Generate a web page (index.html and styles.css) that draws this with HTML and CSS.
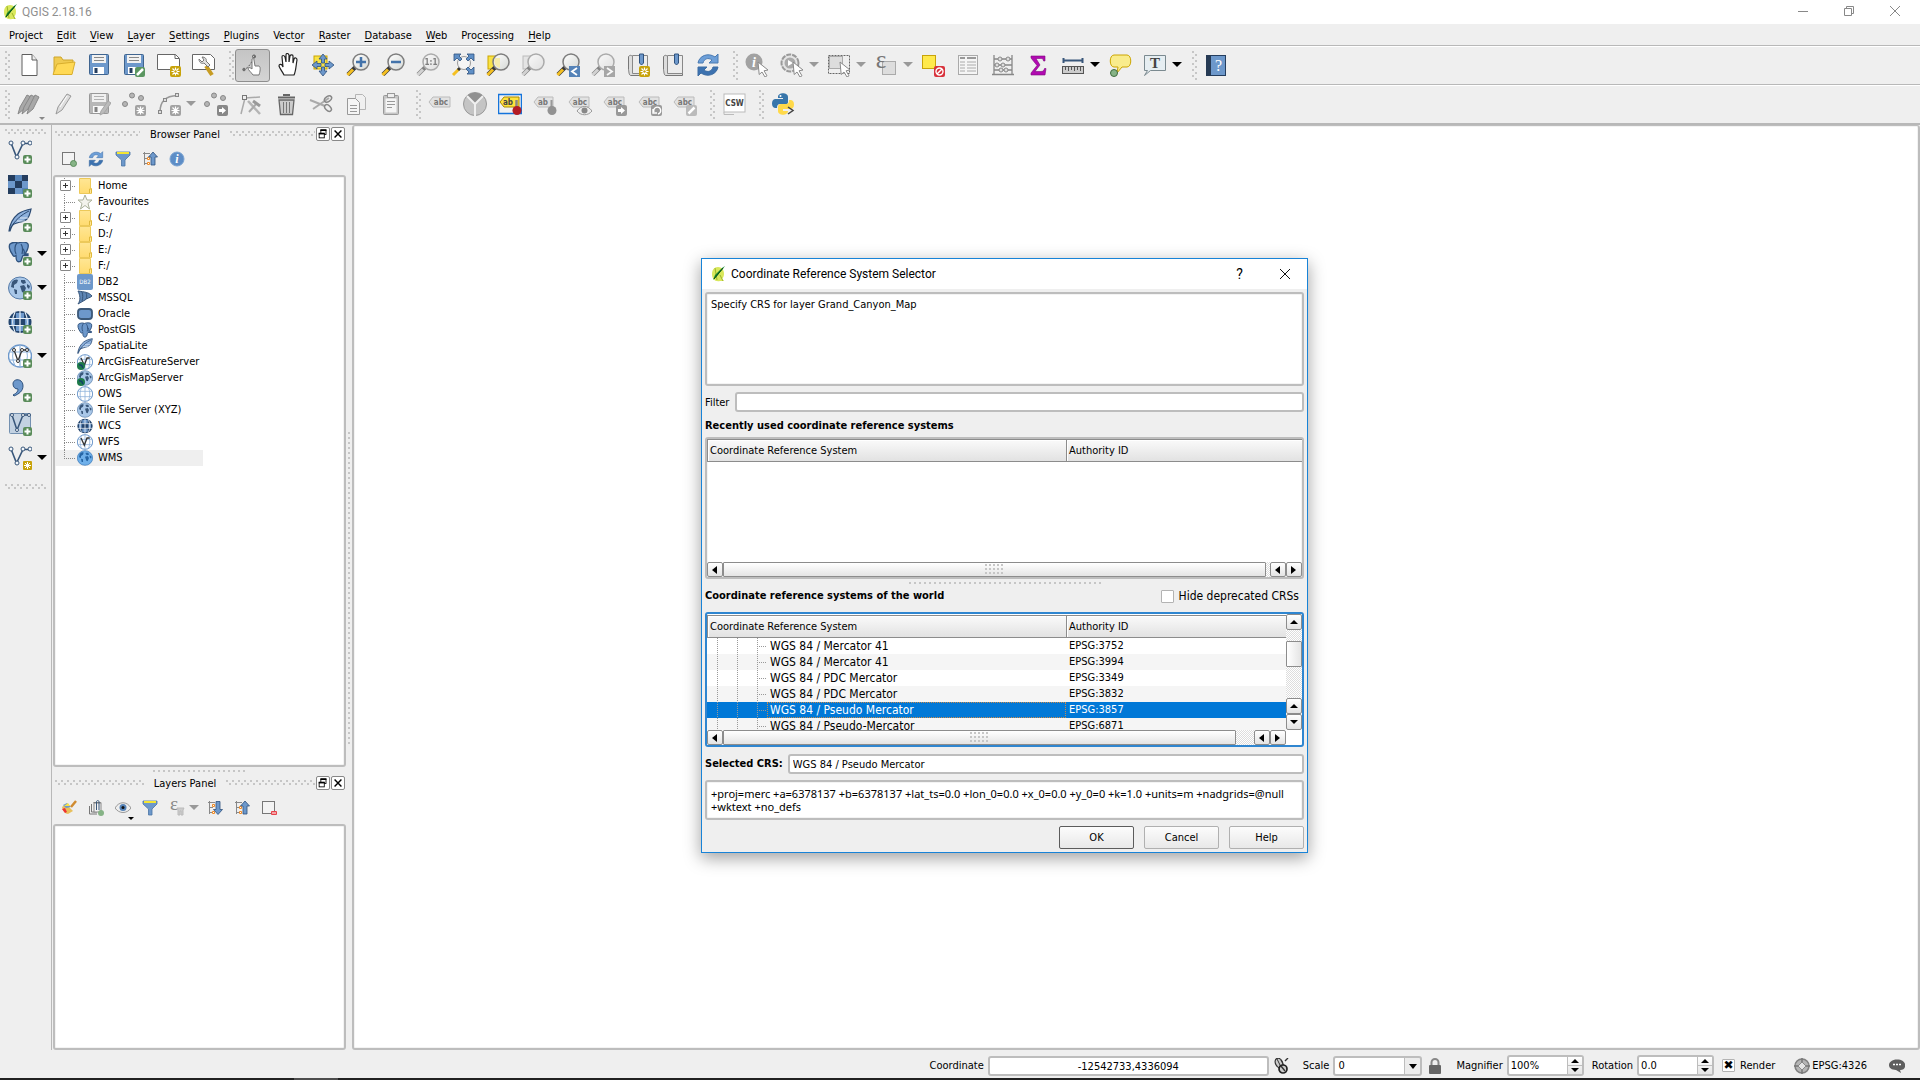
FILE: index.html
```html
<!DOCTYPE html>
<html lang="en">
<head>
<meta charset="utf-8">
<title>QGIS 2.18.16</title>
<link rel="stylesheet" href="styles.css">
</head>
<body>
<svg class="defs" aria-hidden="true">
  <defs>
    <linearGradient id="gGlass" x1="0" y1="0" x2="1" y2="1"><stop offset="0" stop-color="#fff"/><stop offset="1" stop-color="#d5d8d5"/></linearGradient>
    <linearGradient id="gFolder" x1="0" y1="0" x2="0" y2="1"><stop offset="0" stop-color="#ffe694"/><stop offset="1" stop-color="#ffdb70"/></linearGradient>
    <g id="plus"><rect x="15" y="15" width="9" height="9" rx="2" fill="#5a8c5a"/><path d="M19.500 16.500v6M16.500 19.500h6" stroke="#fff" stroke-width="2"/></g>
    <g id="spark"><rect x="13" y="13" width="11" height="11" rx="2" fill="#c8a30a"/><path d="M18.500 14.500v8M14.500 18.500h8M15.500 15.500l6 6M21.500 15.500l-6 6" stroke="#fff" stroke-width="1.200"/><circle cx="18.500" cy="18.500" r="1.200" fill="#c8a30a"/></g>
    <g id="cursor"><path d="M13 9l10 8-4 .8 3 5-2 1.200-3-5-2.800 2.500z" fill="#fff" stroke="#8a8a8a"/></g>
    <g id="lens"><path d="M9 14.500l-7 7" stroke="#3a3a3a" stroke-width="4"/><path d="M7 16.500l-5.500 5.500" stroke="#f5c022" stroke-width="3"/><circle cx="15" cy="9" r="8" fill="url(#gGlass)" stroke="#7d7d7d" stroke-width="1.500"/></g>
    <g id="vec"><path d="M3 3l5.500 14L15 3.500h6" fill="none" stroke="#38567a" stroke-width="1.600"/><g fill="#f4f8fc" stroke="#38567a"><circle cx="3" cy="3" r="2"/><circle cx="15" cy="3" r="2"/><circle cx="22" cy="3" r="2"/><circle cx="9" cy="17" r="2"/></g></g>
    <g id="elephant"><path d="M2 2c3-2 6-2 8-1 4-1.500 9-1 10 1 1 3-1 7-3 10h3v1.500h-5c-1 0-1 6-3 6-3 1-4-1-4-6-2 1.500-3 .500-3.500-1C1.500 8.500.500 4 2 2z" fill="#6d98cb" stroke="#2f527e" stroke-width="1.300"/><path d="M8 12c-2-4-1-9 1-11M13 2c2 3 2 6 1 10M16 12c1-3 0-4-2-6" fill="none" stroke="#2f527e" stroke-width="1.200"/></g>
    <g id="feather"><path d="M1 23c1-7 4-13 9-17 4-3 8-4 13-5-1 4-1 7-4 10-3 3-9 3-13 5-2 1-3 4-4 7z" fill="#8db0dc" stroke="#2b4a72" stroke-width="1.200"/><path d="M2 21C7 12 13 7 21 3" fill="none" stroke="#2b4a72"/><path d="M9 13h8M12 10h8" fill="none" stroke="#dce8f5"/></g>
    <g id="earth"><ellipse cx="12" cy="12" rx="11.500" ry="11" fill="#a9c7e8" stroke="#567ba8"/><path d="M4 6c2-3 5-3 6-2l-1 3-3 2 0 3-3-1zM13 4l4 0 1 3-3 1-2-2zM12 10l4-1 2 3-2 5-2-1zM19 8l3 2-1 3-2-2zM6 13l3 1 0 4-2 0z" fill="#38567a"/></g>
    <g id="grid"><ellipse cx="12" cy="12" rx="11.500" ry="11" fill="#fff" stroke="#6d98cb" stroke-width="1.500"/><path d="M12 1v22M1 8h22M1 16h22M7 2c-3 6-3 14 0 20M17 2c3 6 3 14 0 20" fill="none" stroke="#8fb3da" stroke-width="1.200"/></g>
    <g id="darkgrid"><ellipse cx="12" cy="12" rx="11.500" ry="11" fill="#24456e"/><path d="M8 3h8v5H8zM3 9h4v6H3zM17 9h4v6h-4zM8 16h8v5H8z" fill="#6d98cb"/><path d="M12 1v22M1 8.500h22M1 15.500h22M7 2c-3 6-3 14 0 20M17 2c3 6 3 14 0 20" fill="none" stroke="#e9f0f8" stroke-width="1.200"/></g>
    <g id="grayBadge"><rect x="13" y="13" width="11" height="11" rx="2" fill="#a2a2a2"/></g>

    <symbol id="i-logo" viewBox="0 0 16 16"><path d="M8 1c4 0 6 3 6 7 0 2-1 4-2 5l2 2h-4C5 16 2 13 2 8c0-4 2-7 6-7z" fill="#d9e85c"/><path d="M5 2l2 12M10 9l3 6" stroke="#9db52a"/><path d="M15 0l-3 4-5 6-4 4 2-5 5-5 2-2z" fill="#16852c"/><path d="M13 2L4 13" stroke="#0a4d18"/></symbol>
    <symbol id="i-new" viewBox="0 0 24 24"><path d="M5 1.500h10l5 5.500v15.500H5z" fill="#fff" stroke="#5f5f5f"/><path d="M15 1.500V7h5" fill="#eee" stroke="#5f5f5f"/></symbol>
    <symbol id="i-open" viewBox="0 0 24 24"><path d="M2 21V4h7l2 3h10v4" fill="#f0cb50" stroke="#cda52a"/><path d="M1 21.500L5 11l18-2-3 12.500z" fill="#ffd955" stroke="#d9ae2c"/></symbol>
    <symbol id="i-save" viewBox="0 0 24 24"><rect x="2.500" y="1.500" width="19" height="20" rx="1" fill="#6d98cb" stroke="#3f648f"/><rect x="5" y="2" width="14" height="8" fill="#f1f1f1"/><path d="M7 4.500h10M7 7.500h10" stroke="#888"/><rect x="6" y="14" width="11" height="7" fill="#fff"/><rect x="7.500" y="15" width="3" height="5" fill="#243d5e"/></symbol>
    <symbol id="i-saveas" viewBox="0 0 24 24"><use href="#i-save"/><rect x="13" y="14" width="10" height="10" rx="2" fill="#5a9660"/><path d="M15 22l6-6" stroke="#fff" stroke-width="2.500"/></symbol>
    <symbol id="i-composer" viewBox="0 0 24 24"><path d="M.5 1.500h18l4 4v11H.5z" fill="#fff" stroke="#666"/><path d="M18 1.500v4h4" fill="none" stroke="#666"/><use href="#spark"/></symbol>
    <symbol id="i-manager" viewBox="0 0 24 24"><path d="M.5 1.500h18l4 4v11H.5z" fill="#fff" stroke="#666"/><path d="M14 13l6 9" stroke="#c79c23" stroke-width="4"/><path d="M7 6c0 4 3 5 5 4l4 4 2-2-4-4c1-2-1-4-4-4l2 3-2 2z" fill="#e3e3e3" stroke="#777"/></symbol>
    <symbol id="i-touch" viewBox="0 0 24 24"><path d="M2 17C8 15 10 10 14 3" fill="none" stroke="#555" stroke-dasharray="2 1.500"/><circle cx="13" cy="3.500" r="1.500" fill="none" stroke="#555"/><circle cx="3" cy="16.500" r="1.300" fill="none" stroke="#666"/><path d="M11 6c1-1 2 0 2 1l1 6 4 0c2 1 1 6 0 9h-6c-2-3-5-5-5-7 1-1 3 0 4 1z" fill="#fff" stroke="#777"/></symbol>
    <symbol id="i-pan" viewBox="0 0 24 24"><path d="M7 22c-2-4-4-6-5-9 0-2 2-2 3-1l1 2L5 4c0-2 2-2 3 0l1 5V2c0-2 2-2 3 0v7l1-6c1-2 3-1 3 0v7l1-4c1-2 3-1 3 1-1 5-1 11-3 15z" fill="#fff" stroke="#222" stroke-width="1.200" transform="translate(1 0)"/></symbol>
    <symbol id="i-pansel" viewBox="0 0 24 24"><rect x="3" y="3" width="13" height="13" fill="#f9e345" stroke="#cca500"/><path d="M12 1l4 5h-2.500v4h-3V6H8zM12 23l-4-5h2.500v-4h3v4H16zM1 12l5-4v2.500h4v3H6V16zM23 12l-5 4v-2.500h-4v-3h4V8z" fill="#6d98cb" stroke="#2f527e" stroke-width=".8"/></symbol>
    <symbol id="i-zoomin" viewBox="0 0 24 24"><use href="#lens"/><path d="M15 4v10M10 9h10" stroke="#4373aa" stroke-width="2.500"/></symbol>
    <symbol id="i-zoomout" viewBox="0 0 24 24"><use href="#lens"/><path d="M10 9h10" stroke="#4373aa" stroke-width="2.500"/></symbol>
    <symbol id="i-zoom11" viewBox="0 0 24 24"><use href="#lens"/><text x="15" y="12" font-size="8" font-weight="700" text-anchor="middle" fill="#333">1:1</text></symbol>
    <symbol id="i-full" viewBox="0 0 24 24"><path d="M8 16l-6 6" stroke="#f5c022" stroke-width="3"/><path d="M10 14l-3 3" stroke="#333" stroke-width="3"/><circle cx="13" cy="10" r="6.500" fill="#f5f5f5" stroke="#999"/><path d="M3 1h7L8 3l3 3-2 2-3-3-3 3zM23 1v7l-3-3-3 3-2-2 3-3-2-2zM23 21h-7l2-2-3-3 2-2 3 3 3-3z" fill="#5f8fc6" stroke="#2f527e" stroke-width=".8"/></symbol>
    <symbol id="i-zoomsel" viewBox="0 0 24 24"><rect x="2" y="3" width="12" height="13" fill="#f9e345" stroke="#cca500"/><use href="#lens"/><path d="M9 5h5v10a7 7 0 0 1-5-10z" fill="#f6ecaa"/></symbol>
    <symbol id="i-zoomlayer" viewBox="0 0 24 24"><rect x="2" y="3" width="12" height="13" fill="#ddd" stroke="#999"/><use href="#lens"/></symbol>
    <symbol id="i-zoomlast" viewBox="0 0 24 24"><use href="#lens"/><rect x="13" y="13" width="11" height="11" fill="#5583b8"/><path d="M21 15l-5 3.500 5 3.500" fill="none" stroke="#fff" stroke-width="1.800"/></symbol>
    <symbol id="i-zoomnext" viewBox="0 0 24 24"><use href="#lens"/><rect x="13" y="13" width="11" height="11" fill="#777"/><path d="M16 15l5 3.500-5 3.500" fill="none" stroke="#fff" stroke-width="1.800"/></symbol>
    <symbol id="i-book" viewBox="0 0 24 24"><path d="M2.500 3.500c2-2 3-1 4 0v16H21.500v3H5c-2 0-2-3-2.500-6z" fill="#ddd" stroke="#777"/><path d="M6.500 2.500h15v18h-15z" fill="#ececec" stroke="#888"/><path d="M13.500 1h4v9l-2 2-2-2z" fill="#6d98cb" stroke="#2f527e"/></symbol>
    <symbol id="i-booknew" viewBox="0 0 24 24"><use href="#i-book"/><use href="#spark"/></symbol>
    <symbol id="i-refresh" viewBox="0 0 24 24"><path d="M2 10C3 3 12-1 19 4l3-3v9h-9l3-3c-4-3-8-1-9 3z" fill="#6d9fd8" stroke="#4a7ab2"/><path d="M22 14c-1 7-10 11-17 6l-3 3v-9h9l-3 3c4 3 8 1 9-3z" fill="#3c72b0" stroke="#3c6da3"/></symbol>
    <symbol id="i-identify" viewBox="0 0 24 24"><circle cx="9" cy="9" r="8.500" fill="#a2a2a2"/><text x="9" y="14" font-family="Liberation Serif,serif" font-size="14" font-style="italic" font-weight="700" text-anchor="middle" fill="#fff">i</text><use href="#cursor"/></symbol>
    <symbol id="i-action" viewBox="0 0 24 24"><circle cx="10" cy="10" r="8.500" fill="#e4e4e4" stroke="#999" stroke-width="2" stroke-dasharray="5 1"/><circle cx="10" cy="10" r="5.500" fill="#aaa"/><path d="M8 7l5 3-5 3z" fill="#fff"/><use href="#cursor"/></symbol>
    <symbol id="i-select" viewBox="0 0 24 24"><rect x="1.500" y="2.500" width="21" height="18" fill="none" stroke="#666" stroke-dasharray="2 1"/><rect x="2.500" y="3.500" width="13" height="12" fill="#ddd" stroke="#aaa"/><use href="#cursor"/></symbol>
    <symbol id="i-expr" viewBox="0 0 24 24"><rect x="8.500" y="8.500" width="13" height="13" fill="#ddd" stroke="#aaa"/><text x="7" y="15" font-family="Liberation Serif,serif" font-size="25" text-anchor="middle" fill="#777">ε</text></symbol>
    <symbol id="i-deselect" viewBox="0 0 24 24"><rect x="1.500" y="2.500" width="13" height="13" fill="#ffe94c" stroke="#c8a30a"/><rect x="13" y="13" width="11" height="11" rx="2" fill="#d8323c"/><circle cx="18.500" cy="18.500" r="3.500" fill="none" stroke="#fff" stroke-width="1.400"/><path d="M16 21l5-5" stroke="#fff" stroke-width="1.400"/></symbol>
    <symbol id="i-table" viewBox="0 0 24 24"><rect x="2.500" y="2.500" width="19" height="19" fill="#f5f5f5" stroke="#aaa"/><path d="M4 5h5M11 5h9" stroke="#999" stroke-width="2"/><path d="M4 9h5M11 9h9M4 12h5M11 12h9M4 15h5M11 15h9M4 18h5M11 18h9" stroke="#aaa"/></symbol>
    <symbol id="i-abacus" viewBox="0 0 24 24"><path d="M3 2v19M21 2v19M1 21.500h22M3 6h18M3 12h18M3 17h18" stroke="#888" stroke-width="1.300"/><g fill="#ddd" stroke="#888"><circle cx="9" cy="6" r="2"/><circle cx="17" cy="6" r="2"/><circle cx="6" cy="12" r="2"/><circle cx="12" cy="12" r="2"/><circle cx="10" cy="17" r="2"/><circle cx="15" cy="17" r="2"/></g></symbol>
    <symbol id="i-sigma" viewBox="0 0 24 24"><path d="M5 3h14v5h-1.500c0-2-1-2.500-3-2.500H10L14 12l-5 6.500h6c2 0 3-1 3.500-3H20L19 22H5v-2l6-7.500L5 5z" fill="#b10ab1" stroke="#7d077d" stroke-width=".6"/></symbol>
    <symbol id="i-ruler" viewBox="0 0 24 24"><path d="M2 7.500h20M2.500 5v5M21.500 5v5" stroke="#38567a" stroke-width="2"/><rect x="1.500" y="13.500" width="21" height="7" fill="#ccc" stroke="#555"/><path d="M4.500 14v3M7.500 14v4M10.500 14v3M13.500 14v4M16.500 14v3M19.500 14v4" stroke="#555"/></symbol>
    <symbol id="i-tip" viewBox="0 0 24 24"><path d="M6 2h13c5 0 5 12 0 12h-5l-5 6 1-6H6C1 14 1 2 6 2z" fill="#f9ec8c" stroke="#cca500"/><circle cx="6" cy="20" r="3.500" fill="#86b386" stroke="#3f6b3f"/></symbol>
    <symbol id="i-text" viewBox="0 0 24 24"><path d="M1.500 2.500h21v15h-15l-6 5 3-5h-3z" fill="#e6eef2" stroke="#7b8a90"/><text x="12" y="15" font-family="Liberation Serif,serif" font-size="15" font-weight="700" text-anchor="middle" fill="#444">T</text></symbol>
    <symbol id="i-help" viewBox="0 0 24 24"><rect x="2.500" y="2.500" width="19" height="20" fill="#6d98cb" stroke="#243d5e"/><rect x="2" y="2" width="5" height="21" fill="#263a54"/><text x="14.500" y="18" font-family="Liberation Serif,serif" font-size="16" text-anchor="middle" fill="#fff">?</text></symbol>

    <symbol id="i-pencils" viewBox="0 0 24 24"><g fill="#a8a8a8" stroke="#888"><path d="M1 22l2-7 7-12 4 2-7 12z"/><path d="M5 22l2-7 7-12 4 2-7 12z"/><path d="M10 22l2-7 6-12 4 2-6 12z"/></g></symbol>
    <symbol id="i-pencil" viewBox="0 0 24 24"><path d="M4 22l2-7 9-13 4 2-9 14z" fill="#ddd" stroke="#999"/><path d="M8 15l7-11" stroke="#fff"/></symbol>
    <symbol id="i-saveedit" viewBox="0 0 24 24"><use href="#i-save"/><path d="M13 23l1-4 7-10 3 2-7 10z" fill="#999" stroke="#777"/></symbol>
    <symbol id="i-addfeat" viewBox="0 0 24 24"><g fill="#b5b5b5" stroke="#888"><circle cx="3" cy="12" r="2.500"/><circle cx="10" cy="3.500" r="2.500"/><circle cx="19" cy="6" r="2.500"/></g><use href="#grayBadge"/><path d="M18.500 14.500v8M14.500 18.500h8M15.500 15.500l6 6M21.500 15.500l-6 6" stroke="#fff" stroke-width="1.200"/></symbol>
    <symbol id="i-curve" viewBox="0 0 24 24"><path d="M3 20C3 10 8 4 20 3.500" fill="none" stroke="#999" stroke-width="1.500"/><g fill="#ddd" stroke="#888"><rect x="1.500" y="18.500" width="3" height="3"/><rect x="6.500" y="6.500" width="3" height="3"/><rect x="18.500" y="1.500" width="3" height="3"/></g><use href="#grayBadge"/><path d="M18.500 14.500v8M14.500 18.500h8M15.500 15.500l6 6M21.500 15.500l-6 6" stroke="#fff" stroke-width="1.200"/></symbol>
    <symbol id="i-move" viewBox="0 0 24 24"><g fill="#b5b5b5" stroke="#888"><circle cx="3" cy="12" r="2.500"/><circle cx="10" cy="3.500" r="2.500"/><circle cx="19" cy="6" r="2.500"/></g><rect x="13" y="13" width="11" height="11" rx="2" fill="#888"/><path d="M15 17h3v-2l4 3.500-4 3.500v-2h-3z" fill="#fff"/></symbol>
    <symbol id="i-node" viewBox="0 0 24 24"><path d="M2 22L6 6l15-1" fill="none" stroke="#aaa" stroke-width="1.500"/><rect x="3.500" y="3.500" width="4" height="4" fill="#eee" stroke="#777"/><path d="M9 9l12 13" stroke="#b5b5b5" stroke-width="2.500"/><path d="M18 11l-8 9" stroke="#aaa" stroke-width="2"/><path d="M14 9l7 5" stroke="#999" stroke-width="3"/></symbol>
    <symbol id="i-trash" viewBox="0 0 24 24"><path d="M5 8h15l-1.500 14.500h-12z" fill="#ccc" stroke="#666" stroke-width="1.300"/><path d="M9.500 10v11M12.500 10v11M15.500 10v11" stroke="#777"/><path d="M4 5.500h17M9 3h7" stroke="#666" stroke-width="2"/></symbol>
    <symbol id="i-cut" viewBox="0 0 24 24"><path d="M1 8l15 6M4 17L20 6" stroke="#aaa" stroke-width="2"/><ellipse cx="19" cy="7" rx="4" ry="2.500" transform="rotate(-35 19 7)" fill="none" stroke="#888" stroke-width="1.500"/><ellipse cx="19" cy="16" rx="4" ry="2.500" transform="rotate(45 19 16)" fill="none" stroke="#888" stroke-width="1.500"/></symbol>
    <symbol id="i-copy" viewBox="0 0 24 24"><path d="M11.500 2.500h7l3 3v12h-10z" fill="#f0f0f0" stroke="#b5b5b5"/><path d="M3.500 6.500h8l4 4v12h-12z" fill="#f5f5f5" stroke="#999"/><path d="M6 13.500h7M6 16.500h7M6 19.500h7" stroke="#999"/></symbol>
    <symbol id="i-paste" viewBox="0 0 24 24"><rect x="4.500" y="3.500" width="15" height="19" rx="1" fill="#c5c5c5" stroke="#999"/><rect x="6.500" y="6.500" width="11" height="14" fill="#f5f5f5"/><rect x="8.500" y="1.500" width="7" height="4" fill="#eee" stroke="#999"/><path d="M8 9.500h8M8 12.500h8M8 15.500h5" stroke="#999"/></symbol>
    <symbol id="i-abc" viewBox="0 0 24 24"><path d="M1 10l4-5h17v10H5z" fill="#e2e2e2" stroke="#bbb"/><text x="13" y="13" font-size="8" font-weight="700" text-anchor="middle" fill="#777">abc</text></symbol>
    <symbol id="i-pie" viewBox="0 0 24 24"><circle cx="12" cy="12" r="11.500" fill="#c4c4c4" stroke="#999"/><path d="M12 12L4 4a11.500 11.500 0 0 1 16 0z" fill="#919191"/><path d="M12 12v12M12 12L4 4M12 12l8-8" stroke="#f0f0f0" stroke-width="2"/></symbol>
    <symbol id="i-abred" viewBox="0 0 24 24"><rect x=".5" y="2.500" width="23" height="19" fill="#f1f1f1" stroke="#1474dc" stroke-width="1.500"/><path d="M2 10l4-5h15v10H6z" fill="#ffe33d" stroke="#a88a00"/><text x="10" y="13" font-size="8" font-weight="700" text-anchor="middle" fill="#444">ab</text><path d="M18.500 8v8" stroke="#888" stroke-width="2.500"/><circle cx="19" cy="18.500" r="4.500" fill="#b31c24"/></symbol>
    <symbol id="i-abpin" viewBox="0 0 24 24"><path d="M1 10l4-5h15v10H5z" fill="#e2e2e2" stroke="#bbb"/><text x="10" y="13" font-size="8" font-weight="700" text-anchor="middle" fill="#777">ab</text><path d="M18.500 8v8" stroke="#999" stroke-width="2"/><circle cx="19" cy="18.500" r="4.500" fill="#929292"/></symbol>
    <symbol id="i-abcb" viewBox="0 0 24 24"><path d="M1 10l4-5h16v10H5z" fill="#e2e2e2" stroke="#bbb"/><text x="12" y="13" font-size="8" font-weight="700" text-anchor="middle" fill="#777">abc</text></symbol>
    <symbol id="i-abceye" viewBox="0 0 24 24"><use href="#i-abcb"/><path d="M9 19c4-6 11-6 15 0-4 5-11 5-15 0z" fill="#eee" stroke="#999"/><circle cx="16.500" cy="18.500" r="3" fill="#888"/></symbol>
    <symbol id="i-abcmove" viewBox="0 0 24 24"><use href="#i-abcb"/><rect x="13" y="13" width="11" height="11" rx="2" fill="#999"/><path d="M15 17h3v-2l4 3.500-4 3.500v-2h-3z" fill="#fff"/></symbol>
    <symbol id="i-abcrot" viewBox="0 0 24 24"><use href="#i-abcb"/><rect x="13" y="13" width="11" height="11" rx="2" fill="#999"/><path d="M16 20a3.500 3.500 0 1 1 4 2M15 17v4h4" fill="none" stroke="#fff" stroke-width="1.400"/></symbol>
    <symbol id="i-abcedit" viewBox="0 0 24 24"><use href="#i-abcb"/><rect x="13" y="13" width="11" height="11" rx="2" fill="#bbb"/><path d="M15.500 21.500l6-6" stroke="#fff" stroke-width="2.500"/></symbol>
    <symbol id="i-csw" viewBox="0 0 24 24"><path d="M2 20v2.500h10" fill="none" stroke="#bbb"/><rect x="2" y="2" width="21" height="18" fill="#fff" stroke="#bbb"/><text x="12.500" y="14" font-size="8" font-weight="700" text-anchor="middle" fill="#444">CSW</text></symbol>
    <symbol id="i-python" viewBox="0 0 24 24"><path d="M7 5c0-5 10-5 10 0v5c0 2-1 2-2 2H9c-2 0-3 1-3 4H4c-4 0-4-9 0-9h8V6H7z" fill="#3876ab"/><path d="M17 19c0 5-10 5-10 0v-4c0-2 1-3 3-3h5c2 0 3-1 3-4h2c4 0 4 9 0 9h-8v2z" fill="#ffd94a"/><circle cx="9.500" cy="4" r="1" fill="#fff"/><path d="M17 15l5 3.500-5 3.500" fill="none" stroke="#444" stroke-width="1.500"/></symbol>

    <symbol id="i-vec" viewBox="0 0 24 24"><use href="#vec"/><use href="#plus"/></symbol>
    <symbol id="i-ras" viewBox="0 0 24 24"><path d="M0 1h20v19H0z" fill="#6d98cb"/><path d="M0 1h7v6H0zM14 1h6v6h-6zM7 7h7v7H7zM0 14h7v6H0z" fill="#243d5e"/><path d="M7 1h7v6H7zM14 14h6v6h-6z" fill="#5583b8"/><use href="#plus"/></symbol>
    <symbol id="i-feather" viewBox="0 0 24 24"><use href="#feather"/></symbol>
    <symbol id="i-featherp" viewBox="0 0 24 24"><use href="#feather"/><use href="#plus"/></symbol>
    <symbol id="i-pg" viewBox="0 0 22 20"><use href="#elephant"/></symbol>
    <symbol id="i-pgp" viewBox="0 0 24 24"><use href="#elephant"/><use href="#plus"/></symbol>
    <symbol id="i-earth" viewBox="0 0 24 24"><use href="#earth"/></symbol>
    <symbol id="i-earthp" viewBox="0 0 24 24"><use href="#earth"/><use href="#plus"/></symbol>
    <symbol id="i-wms" viewBox="0 0 24 24"><ellipse cx="12" cy="12" rx="11.500" ry="11" fill="#6fb0ea" stroke="#3574b5"/><path d="M4 6c2-3 5-3 6-2l-1 3-3 2 0 3-3-1zM13 4l4 0 1 3-3 1-2-2zM12 10l4-1 2 3-2 5-2-1zM19 8l3 2-1 3-2-2zM6 13l3 1 0 4-2 0z" fill="#2565a5"/></symbol>
    <symbol id="i-wcs" viewBox="0 0 24 24"><use href="#darkgrid"/></symbol>
    <symbol id="i-wcsp" viewBox="0 0 24 24"><use href="#darkgrid"/><use href="#plus"/></symbol>
    <symbol id="i-ows" viewBox="0 0 24 24"><use href="#grid"/></symbol>
    <symbol id="i-wfs" viewBox="0 0 24 24"><use href="#grid"/><path d="M6 6l5 11 4-11h4" fill="none" stroke="#333" stroke-width="2"/></symbol>
    <symbol id="i-wfsp" viewBox="0 0 24 24"><use href="#grid"/><path d="M6 6l4 11 4-11h5" fill="none" stroke="#333" stroke-width="1.300"/><g fill="#fff" stroke="#333"><circle cx="6" cy="6" r="1.500"/><circle cx="10" cy="17" r="1.500"/><circle cx="14" cy="6" r="1.500"/><circle cx="19" cy="6" r="1.500"/></g><use href="#plus"/></symbol>
    <symbol id="i-comma" viewBox="0 0 24 24"><path d="M5 6c0-6 10-6 10 2 0 5-4 8-9 10l-1-1c4-2 5-4 5-6-3 0-5-2-5-5z" fill="#6d98cb" stroke="#2f527e"/><use href="#plus"/></symbol>
    <symbol id="i-virt" viewBox="0 0 24 24"><rect x="1.500" y="1.500" width="21" height="20" rx="1" fill="#c3d2e2" stroke="#7390b0"/><path d="M4 3l5 15 6-15h6" fill="none" stroke="#38567a" stroke-width="1.500"/><g fill="#fff" stroke="#38567a"><circle cx="4" cy="3" r="1.500"/><circle cx="9" cy="18" r="1.500"/><circle cx="15" cy="3" r="1.500"/><circle cx="21" cy="3" r="1.500"/></g><use href="#plus"/></symbol>
    <symbol id="i-vecnew" viewBox="0 0 24 24"><use href="#vec"/><rect x="15" y="15" width="9" height="9" rx="1" fill="#c8a30a"/><path d="M19.500 16v7M16 19.500h7M17 17l5 5M22 17l-5 5" stroke="#fff"/></symbol>

    <symbol id="i-addl" viewBox="0 0 16 16"><rect x="1.500" y="1.500" width="12" height="12" fill="#f3f3f3" stroke="#777"/><circle cx="12.500" cy="12.500" r="3" fill="#86b386" stroke="#5a8c5a"/></symbol>
    <symbol id="i-funnel" viewBox="0 0 16 16"><path d="M1 1h14v3L10 9v6H6.500V9L1 4z" fill="#6d98cb" stroke="#4a74a5" stroke-width=".8"/><path d="M2 2h12" stroke="#f4e532" stroke-width="2"/></symbol>
    <symbol id="i-collapse" viewBox="0 0 16 16"><path d="M2.500 1v13M1 2.500h7M3 7.500h3M3 12.500h3" fill="none" stroke="#888"/><path d="M5.500 6.500h2v2h-2zM5.500 11.500h2v2h-2z" fill="#fff" stroke="#f08a24"/><path d="M11 1l4.500 5H13v8H9V6H6.500z" fill="#6d98cb" stroke="#2f527e" stroke-width=".8"/></symbol>
    <symbol id="i-expand" viewBox="0 0 16 16"><path d="M2.500 1v13M1 2.500h7M3 7.500h3M3 12.500h3" fill="none" stroke="#888"/><path d="M5.500 4.500h2v2h-2zM5.500 11.500h2v2h-2z" fill="#fff" stroke="#f08a24"/><path d="M11 14.500L6.500 9.500H9v-8h4v8h2.500z" fill="#6d98cb" stroke="#2f527e" stroke-width=".8"/></symbol>
    <symbol id="i-info" viewBox="0 0 16 16"><circle cx="8" cy="8" r="7" fill="#5d8dc6" stroke="#7aa3d2"/><text x="8" y="12" font-family="Liberation Serif,serif" font-size="12" font-style="italic" font-weight="700" text-anchor="middle" fill="#fff">i</text></symbol>
    <symbol id="i-brush" viewBox="0 0 16 16"><path d="M1 7l4-3 7 7-5 3c-3 0-5-3-6-7z" fill="#e8c05c"/><path d="M2 5l4-2 4 4-5 1z" fill="#6d98cb"/><path d="M1 9l3 4 2-1-2-4z" fill="#e33"/><path d="M3 6l4-3 2 3z" fill="#f9e345"/><path d="M15 1l-5 6" stroke="#d08b30" stroke-width="2.500"/></symbol>
    <symbol id="i-group" viewBox="0 0 16 16"><path d="M1.500 6v8H9M3.500 4v8H9M5.500 2.500h7v8" fill="none" stroke="#777"/><rect x="6" y="3" width="7" height="9" fill="#f3f3f3" stroke="#888"/><path d="M8.500 10V2c0-2 2.500-2 2.500 0v8" fill="none" stroke="#38567a"/><circle cx="13" cy="13" r="3" fill="#86b386"/></symbol>
    <symbol id="i-eye" viewBox="0 0 16 16"><path d="M0 8c4-7 12-7 16 0-4 6-12 6-16 0z" fill="#eee" stroke="#999"/><circle cx="8" cy="7.500" r="3.500" fill="#5583b8"/><circle cx="8" cy="7.500" r="1.500" fill="#111"/></symbol>
    <symbol id="i-efilter" viewBox="0 0 16 16"><text x="5" y="10" font-family="Liberation Serif,serif" font-size="19" text-anchor="middle" fill="#888">ε</text><path d="M8 8h7l-1 2v5h-2v-4h-1v4H9v-5z" fill="#ccc" stroke="#bbb"/></symbol>
    <symbol id="i-removel" viewBox="0 0 16 16"><rect x="1.500" y="1.500" width="12" height="12" fill="#f3f3f3" stroke="#777"/><rect x="10" y="11" width="6" height="4" rx="1" fill="#e8434a"/><path d="M11 13h4" stroke="#fff"/></symbol>

    <symbol id="i-folder" viewBox="0 0 16 16"><path d="M2.500.500h11v10h1v5h-12z" fill="url(#gFolder)" stroke="#ecc95a"/><path d="M12.500 15v-4h2v4" fill="#ffe694" stroke="#e0b93c"/></symbol>
    <symbol id="i-star" viewBox="0 0 16 16"><path d="M8 1l2 5h5l-4 3.500L12.500 15 8 11.500 3.500 15 5 9.500 1 6h5z" fill="#f3f3ec" stroke="#aab09a"/></symbol>
    <symbol id="i-db2" viewBox="0 0 16 16"><rect width="16" height="16" rx="2" fill="#6d98cb"/><text x="8" y="10" font-size="6" text-anchor="middle" fill="#fff">DB2</text></symbol>
    <symbol id="i-mssql" viewBox="0 0 16 16"><path d="M1 1c6 1 11 1 14 5-2 2-5 2-7 4l-7 4c3-4 2-9 0-13z" fill="#5f86b5" stroke="#38567a"/><path d="M5 2c1 3 1 6 0 9M9 3c1 2 1 4 0 6" fill="none" stroke="#38567a"/></symbol>
    <symbol id="i-oracle" viewBox="0 0 16 16"><rect x="1" y="3" width="14" height="10" rx="3" fill="#6d98cb" stroke="#3b5878" stroke-width="1.800"/></symbol>
    <symbol id="i-agf" viewBox="0 0 24 24"><use href="#i-wfs"/><circle cx="6" cy="18" r="6" fill="#1d7a4a"/><path d="M3 16l4 1 2 4" stroke="#123c6b" stroke-width="2" fill="none"/></symbol>
    <symbol id="i-agm" viewBox="0 0 24 24"><use href="#earth"/><circle cx="6" cy="18" r="6" fill="#1d7a4a"/><path d="M3 16l4 1 2 4" stroke="#123c6b" stroke-width="2" fill="none"/></symbol>

    <symbol id="i-mouse" viewBox="0 0 16 16"><ellipse cx="6" cy="5" rx="3.500" ry="5" transform="rotate(-25 6 5)" fill="#ccc" stroke="#333" stroke-width="1.300"/><path d="M4 1l4 8M8 2l3 6" stroke="#333"/><ellipse cx="10" cy="11" rx="4" ry="4" fill="#ccc" stroke="#222" stroke-width="1.700"/><path d="M8 8l4 5M15 0l-3 3" stroke="#333" stroke-width="1.400"/></symbol>
    <symbol id="i-lock" viewBox="0 0 14 16"><path d="M3.500 8V4.500a3.500 3.500 0 0 1 7 0V8" fill="none" stroke="#888" stroke-width="2"/><rect x="1" y="7" width="12" height="9" rx="1" fill="#666"/></symbol>
    <symbol id="i-crs" viewBox="0 0 16 16"><circle cx="8" cy="8" r="7" fill="#b5b5b5" stroke="#808080" stroke-width="1.500"/><path d="M8 0v16M0 8h16" stroke="#777" stroke-width="1.500"/><path d="M8 4L12 8 8 12 4 8z" fill="#e5e5e5" stroke="#888"/></symbol>
    <symbol id="i-msg" viewBox="0 0 16 16"><path d="M8 1.500c11 0 10 11 3 10.500l1 3-5-3C-3 12-2 1.500 8 1.500z" fill="#5f5f5f"/><path d="M4 6.500h2M7 6.500h2M10 6.500h2" stroke="#fff" stroke-width="1.500"/></symbol>
    <symbol id="i-float" viewBox="0 0 14 14"><rect x="4.500" y="2.500" width="6" height="5" fill="#fff" stroke="#000"/><path d="M4 2.500h7" stroke="#000" stroke-width="2"/><rect x="2.500" y="6.500" width="6" height="5" fill="#fff" stroke="#000"/><path d="M2 6.500h7" stroke="#000" stroke-width="2"/></symbol>
    <symbol id="i-x" viewBox="0 0 14 14"><path d="M3 3l8 8M11 3l-8 8" stroke="#000" stroke-width="1.700"/></symbol>
  </defs>
</svg>

<div class="app">
  <header class="titlebar">
    <svg class="s16"><use href="#i-logo"/></svg>
    <h1>QGIS 2.18.16</h1>
    <div class="winbtns">
      <button aria-label="Minimize"><svg class="s12" viewBox="0 0 12 12"><path d="M1 6.500h10" stroke="#888"/></svg></button>
      <button aria-label="Restore"><svg class="s12" viewBox="0 0 12 12"><path d="M1.500 3.500h7v7h-7zM3.500 3V1.500h7v7H9" fill="none" stroke="#888"/></svg></button>
      <button aria-label="Close"><svg class="s12" viewBox="0 0 12 12"><path d="M1 1l10 10M11 1L1 11" stroke="#888"/></svg></button>
    </div>
  </header>

  <nav class="menubar">
    <button>Pro<u>j</u>ect</button><button><u>E</u>dit</button><button><u>V</u>iew</button><button><u>L</u>ayer</button><button><u>S</u>ettings</button><button><u>P</u>lugins</button><button>Vect<u>o</u>r</button><button><u>R</u>aster</button><button><u>D</u>atabase</button><button><u>W</u>eb</button><button>Pro<u>c</u>essing</button><button><u>H</u>elp</button>
  </nav>

  <div class="toolbar">
    <i class="grip first"></i>
    <button aria-label="New"><svg><use href="#i-new"/></svg></button>
    <button aria-label="Open"><svg><use href="#i-open"/></svg></button>
    <button aria-label="Save"><svg><use href="#i-save"/></svg></button>
    <button aria-label="Save as"><svg><use href="#i-saveas"/></svg></button>
    <button aria-label="New composer"><svg><use href="#i-composer"/></svg></button>
    <button aria-label="Composer manager"><svg><use href="#i-manager"/></svg></button>
    <i class="grip"></i>
    <button class="pressed" aria-label="Touch zoom and pan"><svg><use href="#i-touch"/></svg></button>
    <button aria-label="Pan"><svg><use href="#i-pan"/></svg></button>
    <button aria-label="Pan to selection"><svg><use href="#i-pansel"/></svg></button>
    <button aria-label="Zoom in"><svg><use href="#i-zoomin"/></svg></button>
    <button aria-label="Zoom out"><svg><use href="#i-zoomout"/></svg></button>
    <button class="dis" aria-label="Zoom to native resolution"><svg><use href="#i-zoom11"/></svg></button>
    <button aria-label="Zoom full"><svg><use href="#i-full"/></svg></button>
    <button aria-label="Zoom to selection"><svg><use href="#i-zoomsel"/></svg></button>
    <button class="dis" aria-label="Zoom to layer"><svg><use href="#i-zoomlayer"/></svg></button>
    <button aria-label="Zoom last"><svg><use href="#i-zoomlast"/></svg></button>
    <button class="dis" aria-label="Zoom next"><svg><use href="#i-zoomnext"/></svg></button>
    <button aria-label="New bookmark"><svg><use href="#i-booknew"/></svg></button>
    <button aria-label="Show bookmarks"><svg><use href="#i-book"/></svg></button>
    <button aria-label="Refresh"><svg><use href="#i-refresh"/></svg></button>
    <i class="grip"></i>
    <button aria-label="Identify"><svg><use href="#i-identify"/></svg></button>
    <button class="drop off" aria-label="Run action"><svg><use href="#i-action"/></svg></button>
    <button class="drop off" aria-label="Select features"><svg><use href="#i-select"/></svg></button>
    <button class="drop off" aria-label="Select by expression"><svg><use href="#i-expr"/></svg></button>
    <button aria-label="Deselect"><svg><use href="#i-deselect"/></svg></button>
    <button aria-label="Attribute table"><svg><use href="#i-table"/></svg></button>
    <button aria-label="Field calculator"><svg><use href="#i-abacus"/></svg></button>
    <button aria-label="Statistics"><svg><use href="#i-sigma"/></svg></button>
    <button class="drop" aria-label="Measure"><svg><use href="#i-ruler"/></svg></button>
    <button aria-label="Map tips"><svg><use href="#i-tip"/></svg></button>
    <button class="drop" aria-label="Text annotation"><svg><use href="#i-text"/></svg></button>
    <i class="grip"></i>
    <button aria-label="Help contents"><svg><use href="#i-help"/></svg></button>
  </div>

  <div class="toolbar">
    <i class="grip first"></i>
    <button class="corner" aria-label="Current edits"><svg><use href="#i-pencils"/></svg></button>
    <button aria-label="Toggle editing"><svg><use href="#i-pencil"/></svg></button>
    <button class="dis" aria-label="Save layer edits"><svg><use href="#i-saveedit"/></svg></button>
    <button aria-label="Add feature"><svg><use href="#i-addfeat"/></svg></button>
    <button class="drop off" aria-label="Add circular string"><svg><use href="#i-curve"/></svg></button>
    <button aria-label="Move feature"><svg><use href="#i-move"/></svg></button>
    <button aria-label="Node tool"><svg><use href="#i-node"/></svg></button>
    <button aria-label="Delete selected"><svg><use href="#i-trash"/></svg></button>
    <button aria-label="Cut"><svg><use href="#i-cut"/></svg></button>
    <button aria-label="Copy"><svg><use href="#i-copy"/></svg></button>
    <button aria-label="Paste"><svg><use href="#i-paste"/></svg></button>
    <i class="grip"></i>
    <button aria-label="Labeling"><svg><use href="#i-abc"/></svg></button>
    <button aria-label="Diagrams"><svg><use href="#i-pie"/></svg></button>
    <button aria-label="Highlight pinned labels"><svg><use href="#i-abred"/></svg></button>
    <button aria-label="Pin labels"><svg><use href="#i-abpin"/></svg></button>
    <button aria-label="Show or hide labels"><svg><use href="#i-abceye"/></svg></button>
    <button aria-label="Move label"><svg><use href="#i-abcmove"/></svg></button>
    <button aria-label="Rotate label"><svg><use href="#i-abcrot"/></svg></button>
    <button aria-label="Change label"><svg><use href="#i-abcedit"/></svg></button>
    <i class="grip"></i>
    <button aria-label="MetaSearch"><svg><use href="#i-csw"/></svg></button>
    <i class="grip"></i>
    <button aria-label="Python console"><svg><use href="#i-python"/></svg></button>
  </div>

  <main class="work">
    <aside class="sidebar">
      <i class="hgrip"></i>
      <button aria-label="Add vector layer"><svg><use href="#i-vec"/></svg></button>
      <button aria-label="Add raster layer"><svg><use href="#i-ras"/></svg></button>
      <button aria-label="Add SpatiaLite layer"><svg><use href="#i-featherp"/></svg></button>
      <button class="drop" aria-label="Add PostGIS layer"><svg><use href="#i-pgp"/></svg></button>
      <button class="drop" aria-label="Add WMS layer"><svg><use href="#i-earthp"/></svg></button>
      <button aria-label="Add WCS layer"><svg><use href="#i-wcsp"/></svg></button>
      <button class="drop" aria-label="Add WFS layer"><svg><use href="#i-wfsp"/></svg></button>
      <button aria-label="Add delimited text layer"><svg><use href="#i-comma"/></svg></button>
      <button aria-label="Add virtual layer"><svg><use href="#i-virt"/></svg></button>
      <button class="drop" aria-label="New layer"><svg><use href="#i-vecnew"/></svg></button>
      <i class="hgrip end"></i>
    </aside>

    <div class="docks">
      <section class="dock browser">
        <header class="dockhead"><i class="hgrip"></i><h2>Browser Panel</h2><i class="hgrip"></i><button aria-label="Float"><svg><use href="#i-float"/></svg></button><button aria-label="Close"><svg><use href="#i-x"/></svg></button></header>
        <div class="docktools">
          <button aria-label="Add selected layers"><svg><use href="#i-addl"/></svg></button>
          <button aria-label="Refresh"><svg><use href="#i-refresh"/></svg></button>
          <button aria-label="Filter browser"><svg><use href="#i-funnel"/></svg></button>
          <button aria-label="Collapse all"><svg><use href="#i-collapse"/></svg></button>
          <button aria-label="Properties"><svg><use href="#i-info"/></svg></button>
        </div>
        <ul class="tree box">
          <li class="exp"><svg><use href="#i-folder"/></svg>Home</li>
          <li><svg><use href="#i-star"/></svg>Favourites</li>
          <li class="exp"><svg><use href="#i-folder"/></svg>C:/</li>
          <li class="exp"><svg><use href="#i-folder"/></svg>D:/</li>
          <li class="exp"><svg><use href="#i-folder"/></svg>E:/</li>
          <li class="exp"><svg><use href="#i-folder"/></svg>F:/</li>
          <li><svg><use href="#i-db2"/></svg>DB2</li>
          <li><svg><use href="#i-mssql"/></svg>MSSQL</li>
          <li><svg><use href="#i-oracle"/></svg>Oracle</li>
          <li><svg><use href="#i-pg"/></svg>PostGIS</li>
          <li><svg><use href="#i-feather"/></svg>SpatiaLite</li>
          <li><svg><use href="#i-agf"/></svg>ArcGisFeatureServer</li>
          <li><svg><use href="#i-agm"/></svg>ArcGisMapServer</li>
          <li><svg><use href="#i-ows"/></svg>OWS</li>
          <li><svg><use href="#i-earth"/></svg>Tile Server (XYZ)</li>
          <li><svg><use href="#i-wcs"/></svg>WCS</li>
          <li><svg><use href="#i-wfs"/></svg>WFS</li>
          <li class="hl"><svg><use href="#i-wms"/></svg>WMS</li>
        </ul>
      </section>
      <i class="split"></i>
      <section class="dock layers">
        <header class="dockhead"><i class="hgrip"></i><h2>Layers Panel</h2><i class="hgrip"></i><button aria-label="Float"><svg><use href="#i-float"/></svg></button><button aria-label="Close"><svg><use href="#i-x"/></svg></button></header>
        <div class="docktools">
          <button aria-label="Layer styling"><svg><use href="#i-brush"/></svg></button>
          <button aria-label="Add group"><svg><use href="#i-group"/></svg></button>
          <button class="corner" aria-label="Visibility"><svg><use href="#i-eye"/></svg></button>
          <button aria-label="Filter legend"><svg><use href="#i-funnel"/></svg></button>
          <button class="drop off" aria-label="Filter by expression"><svg><use href="#i-efilter"/></svg></button>
          <button aria-label="Expand all"><svg><use href="#i-expand"/></svg></button>
          <button aria-label="Collapse all"><svg><use href="#i-collapse"/></svg></button>
          <button aria-label="Remove layer"><svg><use href="#i-removel"/></svg></button>
        </div>
        <div class="box fill"></div>
      </section>
    </div>
    <i class="vsplit"></i>
    <div class="canvas box"></div>
  </main>

  <footer class="status">
    <label for="coord">Coordinate</label><input id="coord" class="coord" value="-12542733,4336094">
    <button class="plain" aria-label="Toggle extents"><svg class="s16"><use href="#i-mouse"/></svg></button>
    <label for="scale" class="lscale">Scale</label>
    <span class="combo"><select id="scale"><option>0</option></select></span>
    <svg class="lock"><use href="#i-lock"/></svg>
    <label for="mag">Magnifier</label>
    <span class="spin"><input id="mag" value="100%"><span class="arrows"><button aria-label="Increase magnifier"></button><button class="dn" aria-label="Decrease magnifier"></button></span></span>
    <label for="rot">Rotation</label>
    <span class="spin"><input id="rot" value="0.0"><span class="arrows"><button aria-label="Increase rotation"></button><button class="dn" aria-label="Decrease rotation"></button></span></span>
    <label class="render"><input type="checkbox" checked>Render</label>
    <button class="plain epsg"><svg class="s16"><use href="#i-crs"/></svg>EPSG:4326</button>
    <button class="plain" aria-label="Messages"><svg class="s16"><use href="#i-msg"/></svg></button>
  </footer>
  <div class="taskbar"></div>
</div>

<div class="dialog" role="dialog" aria-labelledby="dlgt">
  <header class="dlghead">
    <svg class="s16"><use href="#i-logo"/></svg>
    <h2 id="dlgt">Coordinate Reference System Selector</h2>
    <button aria-label="What is this">?</button>
    <button aria-label="Close"><svg class="s12" viewBox="0 0 12 12"><path d="M1 1l10 10M11 1L1 11" stroke="#111"/></svg></button>
  </header>
  <div class="dlgbody">
    <div class="box note">Specify CRS for layer Grand_Canyon_Map</div>
    <div class="row filter"><label for="flt">Filter</label><input id="flt"></div>
    <h3>Recently used coordinate reference systems</h3>
    <div class="box list recent">
      <table><thead><tr><th class="c1">Coordinate Reference System</th><th>Authority ID</th></tr></thead></table>
      <div class="hbar"><button class="sb lt" aria-label="Scroll left"></button><span class="thumb wide"></span><span class="trough"></span><button class="sb lt" aria-label="Scroll left"></button><button class="sb rt" aria-label="Scroll right"></button></div>
    </div>
    <i class="split long"></i>
    <div class="row world"><h3>Coordinate reference systems of the world</h3><label class="hide"><input type="checkbox">Hide deprecated CRSs</label></div>
    <div class="box list focus">
      <div class="rows">
        <div class="left">
          <div class="clip">
          <table>
            <thead><tr><th class="c1">Coordinate Reference System</th><th>Authority ID</th></tr></thead>
            <tbody>
              <tr><td><span>WGS 84 / Mercator 41</span></td><td>EPSG:3752</td></tr>
              <tr><td><span>WGS 84 / Mercator 41</span></td><td>EPSG:3994</td></tr>
              <tr><td><span>WGS 84 / PDC Mercator</span></td><td>EPSG:3349</td></tr>
              <tr><td><span>WGS 84 / PDC Mercator</span></td><td>EPSG:3832</td></tr>
              <tr class="sel"><td><span>WGS 84 / Pseudo Mercator</span></td><td>EPSG:3857</td></tr>
              <tr><td><span>WGS 84 / Pseudo-Mercator</span></td><td>EPSG:6871</td></tr>
            </tbody>
          </table>
          </div>
          <div class="hbar"><button class="sb lt" aria-label="Scroll left"></button><span class="thumb"></span><span class="trough"></span><button class="sb lt" aria-label="Scroll left"></button><button class="sb rt" aria-label="Scroll right"></button></div>
        </div>
        <div class="vbar"><button class="sb up" aria-label="Scroll up"></button><span class="trough t1"></span><span class="thumb"></span><span class="trough"></span><button class="sb up" aria-label="Scroll up"></button><button class="sb dn" aria-label="Scroll down"></button></div>
      </div>
    </div>
    <div class="row selcrs"><label for="sel">Selected CRS:</label><input id="sel" value="WGS 84 / Pseudo Mercator"></div>
    <div class="box proj">+proj=merc +a=6378137 +b=6378137 +lat_ts=0.0 +lon_0=0.0 +x_0=0.0 +y_0=0 +k=1.0 +units=m +nadgrids=@null +wktext +no_defs</div>
    <div class="row actions"><button class="ok">OK</button><button>Cancel</button><button>Help</button></div>
  </div>
</div>
</body>
</html>
```
FILE: styles.css
```css
* { box-sizing: border-box; }
:root {
  --bg: #efefef;
  --line: #b8b8b8;
  --edge: #8c8c8c;
  --face: linear-gradient(#fff, #e4e4e4);
  --dot: conic-gradient(from 0deg at 2px 2px, transparent 75%, #c6c6c6 0);
  --ui: "DejaVu Sans Condensed", "DejaVu Sans", sans-serif;
  --title: Roboto, "Open Sans", sans-serif;
}
html, body { height: 100%; }
body { margin: 0; overflow: hidden; background: var(--bg); color: #000; font: 11px/16px var(--ui); }
button, input, select { font: inherit; color: inherit; margin: 0; padding: 0; border: 0; background: none; }
h1, h2, h3, ul { margin: 0; padding: 0; font-size: inherit; font-weight: 400; }
svg { display: block; flex: none; }
.defs { position: absolute; width: 0; height: 0; }
.s16 { width: 16px; height: 16px; }
.s12 { width: 12px; height: 12px; }

.app { height: 100vh; display: flex; flex-direction: column; }
.titlebar { height: 24px; flex: none; display: flex; align-items: center; gap: 4px; padding: 0 2px; background: #fff; color: #8f8f8f; font: 12px/16px var(--title); }
.winbtns { margin-left: auto; display: flex; height: 24px; padding-bottom: 3px; }
.winbtns button { width: 46px; display: grid; place-items: center; }

.menubar { height: 21px; flex: none; display: flex; padding: 1px 0 0 2px; }
.menubar button { padding: 0 7px; height: 22px; white-space: nowrap; }
.menubar u { text-underline-offset: 2px; }

.toolbar { height: 39px; flex: none; display: flex; align-items: center; border-top: 1px solid var(--line); box-shadow: inset 0 1px #fff; }
.toolbar button, .sidebar button, .docktools button { position: relative; flex: none; display: flex; align-items: center; justify-content: center; }
.toolbar button { width: 35px; height: 33px; }
.toolbar svg, .sidebar svg { width: 24px; height: 24px; }
.toolbar button.drop { width: 47px; padding-right: 12px; }
.drop::after, .corner::after { content: ""; position: absolute; right: 2px; top: 50%; margin-top: -3px; border: 5px solid transparent; border-bottom: 0; border-top-color: #000; }
.drop.off::after { border-top-color: #999; }
.corner::after { border-width: 3px; border-bottom: 0; right: 1px; top: auto; bottom: 1px; border-top-color: #888; }
.dis svg { filter: grayscale(1); opacity: .6; }
.toolbar .pressed { background: linear-gradient(#c4c4c4, #d4d4d4); border: 1px solid #8e8e8e; border-radius: 3px; }
.grip { flex: none; width: 6px; height: 29px; margin-left: 8px; background: var(--dot) 0 0 / 6px 6px, var(--dot) 3px 3px / 6px 6px; }
.grip.first { margin-left: 5px; }
.hgrip { display: block; height: 6px; background: var(--dot) 0 0 / 6px 6px, var(--dot) 3px 3px / 6px 6px; }

.work { flex: 1; min-height: 0; display: flex; border-top: 2px solid var(--line); }
.sidebar { width: 51px; flex: none; padding: 4px 5px 0; }
.sidebar button { width: 41px; height: 34px; padding: 0 12px 0 0; }
.sidebar .drop::after { right: -1px; }
.sidebar .hgrip.end { margin-top: 9px; }
.docks { width: 295px; flex: none; display: flex; flex-direction: column; padding-left: 1px; border-left: 1px solid var(--line); }
.dock { display: flex; flex-direction: column; min-height: 0; }
.browser { flex: 643; }
.layers { flex: 276; }
.dockhead { flex: none; height: 17px; display: flex; align-items: center; gap: 1px; padding: 1px 1px 0 2px; }
.dockhead .hgrip { flex: 1; }
.dockhead h2 { padding: 1px 9px 0; }
.dockhead button { width: 14px; height: 14px; display: grid; place-items: center; border: 1px solid #888; border-radius: 2px; background: #fff; }
.dockhead svg { width: 12px; height: 12px; }
.docktools { flex: none; height: 33px; display: flex; align-items: center; padding: 0 0 0 2px; }
.docktools button { width: 27px; height: 24px; }
.docktools svg { width: 16px; height: 16px; }
.docktools .drop { width: 38px; padding-right: 11px; }
.docktools .corner::after { bottom: 0; right: 2px; border-top-color: #000; }
.box { background: #fff; border: 2px solid #bdbdbd; border-radius: 3px; box-shadow: inset 0 0 0 1px #f3f3f3; }
.tree { flex: 1; list-style: none; overflow: hidden; padding-top: 1px; }
.fill { flex: 1; }
.tree li { position: relative; height: 16px; width: 148px; display: flex; align-items: center; gap: 5px; padding-left: 22px; white-space: nowrap; line-height: 18px; }
.tree li::before { content: ""; position: absolute; left: 9px; top: 0; width: 10px; height: 8px; border-left: 1px dotted #888; border-bottom: 1px dotted #888; }
.tree li::after { content: ""; position: absolute; left: 9px; top: 8px; height: 8px; border-left: 1px dotted #888; }
.tree li:last-child::after { display: none; }
.tree .exp::after { left: 5px; top: 2px; width: 9px; height: 9px; border: 1px solid #888; border-radius: 1px; background: linear-gradient(#333, #333) 50% 50% / 5px 1px no-repeat, linear-gradient(#333, #333) 50% 50% / 1px 5px no-repeat, #fff; }
.tree svg { width: 16px; height: 16px; }
.tree .hl { background: #efefef; }
.split { flex: none; display: block; width: 93px; height: 7px; margin: 0 auto; background: var(--dot) 0 3px / 5px 7px repeat-x; }
.split.long { width: 192px; }
.vsplit { flex: none; align-self: center; width: 2px; height: 312px; margin: 0 2px; background: var(--dot) 0 0 / 5px 5px; }
.canvas { flex: 1; border-top-width: 1px; }

.status { height: 28px; flex: none; display: flex; align-items: center; justify-content: flex-end; gap: 4px; padding: 3px 15px 0 0; white-space: nowrap; }
.status input, .row input { background: #fff; border: 2px solid #bdbdbd; border-radius: 3px; height: 20px; padding: 1px 3px 0; }
.status .coord { width: 281px; text-align: center; }
.plain { display: flex; align-items: center; gap: 2px; }
.lscale { margin-left: 10px; }
.combo { position: relative; }
.combo select { appearance: none; display: block; width: 89px; height: 20px; padding: 0 3px; border: 2px solid #bdbdbd; border-radius: 3px; background: linear-gradient(90deg, #bdbdbd 1px, #ececec 1px) right / 16px 100% no-repeat, #fff; }
.combo::after { content: ""; position: absolute; right: 5px; top: 8px; border: 4px solid transparent; border-top: 5px solid #000; border-bottom: 0; pointer-events: none; }
.lock { width: 14px; height: 16px; margin: 0 10px 0 2px; }
.spin { display: flex; width: 77px; height: 21px; border: 2px solid #bdbdbd; border-radius: 3px; background: #fff; margin-right: 4px; }
.status .spin input { flex: 1; width: 0; height: auto; border: 0; background: none; padding: 0 2px; }
.arrows { width: 15px; border-left: 1px solid #bdbdbd; display: flex; flex-direction: column; background: var(--face); }
.arrows button { flex: 1; position: relative; }
.arrows .dn { border-top: 1px solid #bdbdbd; }
.arrows button::after { content: ""; position: absolute; left: 3px; top: 2px; border: 4px solid transparent; border-bottom-color: #000; border-top: 0; }
.arrows .dn::after { border-top: 4px solid #000; border-bottom: 0; }
.render, .hide { display: flex; align-items: center; gap: 5px; }
.status .render input, .row .hide input { appearance: none; width: 13px; height: 13px; padding: 0; border: 1px solid #b3b3b3; border-radius: 1px; background: #fff; }
.status .render input { display: grid; place-items: center; }
.status .render input::before { content: "✖"; font: 12px/11px "DejaVu Sans", sans-serif; }
.epsg { margin: 0 18px 0 15px; }
.taskbar { height: 2px; flex: none; background: linear-gradient(90deg, #212121 294px, #4d4d4d 294px, #4d4d4d 338px, #212121 338px); }

.dialog { position: absolute; left: 701px; top: 258px; width: 607px; background: var(--bg); border: 1px solid #1883d7; box-shadow: 0 5px 16px rgba(0, 0, 0, .38); }
.dlghead { height: 30px; display: flex; align-items: center; padding-left: 8px; background: #fff; font: 12px/16px var(--title); }
.dlghead h2 { flex: 1; margin-left: 5px; }
.dlghead button { width: 45px; display: grid; place-items: center; font-size: 14px; }
.dlgbody { padding: 3px 3px 3px; display: flex; flex-direction: column; }
.note { height: 94px; padding: 3px 4px; }
.row { display: flex; align-items: center; }
.row input { flex: 1; min-width: 0; }
.filter { height: 20px; margin-top: 6px; gap: 6px; }
.filter label { padding-top: 1px; }
.dlgbody h3, .selcrs label { font-weight: 700; font-size: 11px; line-height: 16px; }
.dlgbody > h3 { margin: 6px 0 3px; }
.list { display: flex; flex-direction: column; }
.recent { height: 142px; justify-content: space-between; }
table { width: 100%; border-collapse: separate; border-spacing: 0; table-layout: fixed; }
th { height: 23px; padding: 1px 2px 0; text-align: left; font-weight: 400; background: linear-gradient(#fafafa, #e2e2e2); border: 1px solid var(--edge); border-width: 1px 0 1px 1px; box-shadow: inset 1px 1px #fff; }
.c1 { width: 359px; }
.clip table { margin-top: 1px; }
td { height: 16px; padding: 0 3px; white-space: nowrap; line-height: 16px; }
tbody tr:nth-child(even) { background: #f5f5f5; }
tbody tr.sel { background: #0078d7; color: #fff; }
td:first-child { padding: 0 0 0 51px; background: repeating-linear-gradient(#999 0 1px, transparent 1px 2px) 10px 0 / 1px 16px no-repeat, repeating-linear-gradient(#999 0 1px, transparent 1px 2px) 30px 0 / 1px 16px no-repeat, repeating-linear-gradient(#999 0 1px, transparent 1px 2px) 50px 0 / 1px 16px no-repeat, repeating-linear-gradient(90deg, #999 0 1px, transparent 1px 2px) 50px 8px / 10px 1px no-repeat; }
td span { display: block; margin-left: 9px; padding: 0 3px; font-size: 12px; }
.sel td span { outline: 1px dotted #c98a4a; outline-offset: -1px; }
.focus { height: 135px; border-color: #2f86d0; box-shadow: none; }
.rows { display: flex; height: 131px; }
.left { flex: 1; min-width: 0; display: flex; flex-direction: column; }
.clip { flex: 1; min-height: 0; overflow: hidden; }
.hbar, .vbar { display: flex; flex: none; }
.hbar { height: 15px; }
.vbar { width: 16px; flex-direction: column; height: 116px; }
.sb { position: relative; width: 16px; height: 16px; border: 1px solid var(--edge); border-radius: 2px; background: var(--face); }
.hbar .sb { height: 15px; }
.sb::after { content: ""; position: absolute; left: 4px; top: 3px; border: 4px solid transparent; }
.lt::after { border-right: 5px solid #000; border-left: 0; }
.rt::after { border-left: 5px solid #000; border-right: 0; }
.up::after, .dn::after { left: 3px; top: 5px; }
.up::after { border-bottom-color: #000; border-top: 0; }
.sb.dn::after { border-top-color: #000; border-bottom: 0; }
.thumb { border: 1px solid var(--edge); border-radius: 1px; }
.hbar .thumb { width: 513px; background: var(--face); display: grid; place-items: center; }
.hbar .thumb.wide { width: 543px; }
.hbar .thumb::after { content: ""; width: 20px; height: 11px; background: var(--dot) 0 0 / 4px 4px; }
.vbar .thumb { height: 26px; background: linear-gradient(90deg, #fff, #e4e4e4); }
.trough { flex: 1; background: repeating-conic-gradient(#ddd 0 25%, #fff 0 50%) 0 0 / 2px 2px; }
.vbar .t1 { flex: none; height: 11px; }
.world { height: 26px; padding-bottom: 6px; justify-content: space-between; }
.row .hide input { flex: none; }
.hide { padding-right: 5px; font-size: 12px; }
.selcrs { height: 20px; margin-top: 7px; gap: 5px; }
.proj { margin-top: 6px; height: 40px; padding: 5px 0 0 4px; font-family: "Noto Sans", sans-serif; line-height: 13px; }
.actions { justify-content: flex-end; gap: 10px; margin-top: 6px; }
.actions button { width: 75px; height: 23px; padding-top: 1px; border: 1px solid #b0b0b0; border-radius: 2px; background: linear-gradient(#fcfcfc, #e8e8e8); }
.actions .ok { border-color: #5c5c5c; }
```
